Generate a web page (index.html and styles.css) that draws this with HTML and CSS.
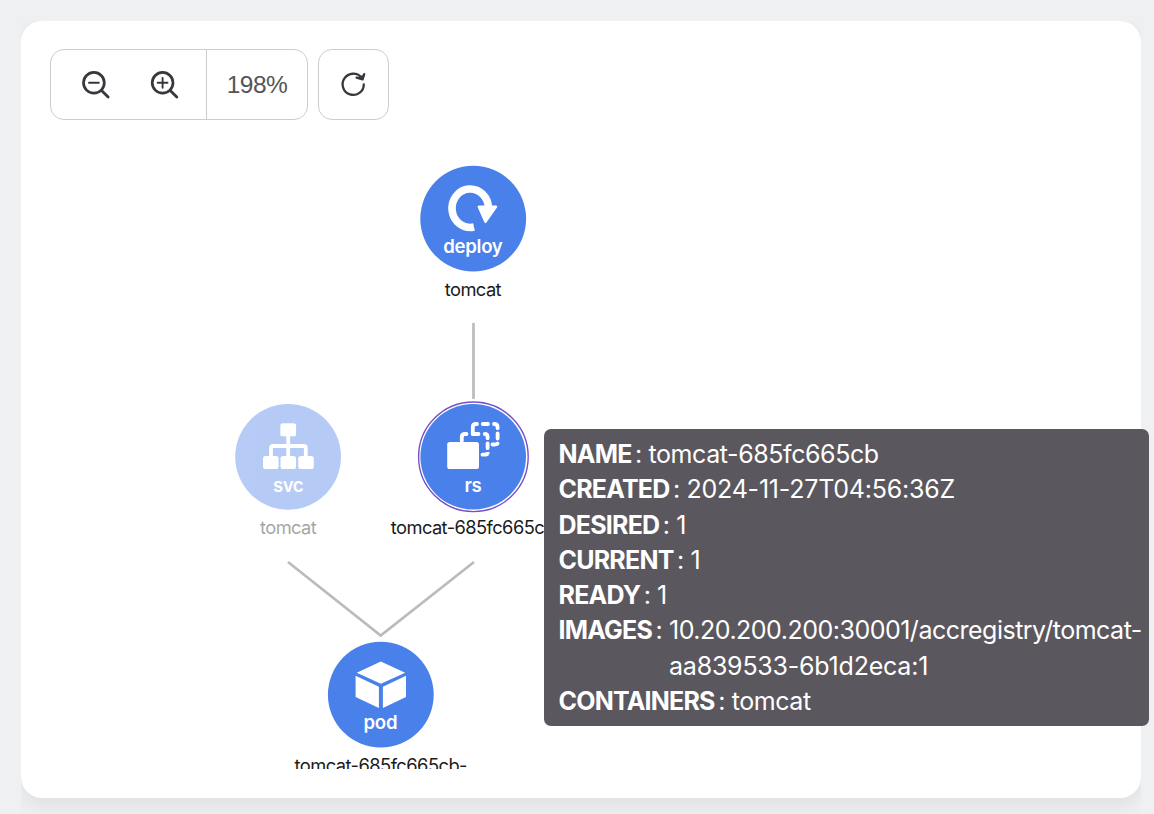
FILE: index.html
```html
<!DOCTYPE html>
<html lang="en">
<head>
<meta charset="utf-8">
<title>Workload topology</title>
<link rel="stylesheet" href="styles.css">
</head>
<body>
<main class="card">
  <div class="toolbar">
    <div class="zoom-group">
      <div class="zoom-buttons">
        <button class="icon-button" aria-label="Zoom out">
          <svg class="icon" viewBox="0 0 30 30"><circle cx="12.9" cy="12.8" r="10.4" stroke-width="2.7"/><path d="M8 12.8h9.8" stroke-width="1.9"/><path d="M20.5 20.4l6.6 6.5" stroke-width="2.8"/></svg>
        </button>
        <button class="icon-button" aria-label="Zoom in">
          <svg class="icon" viewBox="0 0 30 30"><circle cx="12.6" cy="12.8" r="10.4" stroke-width="2.7"/><path d="M7.7 12.8h9.8M12.6 7.9v9.8" stroke-width="1.9"/><path d="M20.2 20.4l6.6 6.5" stroke-width="2.8"/></svg>
        </button>
      </div>
      <div class="zoom-level">198%</div>
    </div>
    <button class="refresh" aria-label="Refresh">
      <svg class="icon" viewBox="0 0 30 30"><path d="M24.8 14.4A10.6 10.6 0 1 1 22.4 7.6" stroke-width="2.3"/><path d="M25.2 4.2L23.6 9.4L17.6 7.6" stroke-width="2.3"/><path d="M25 4.8L23.4 9.2L20 7.2Z" fill="#38373d" stroke-width="0.5"/></svg>
    </button>
  </div>

  <svg class="graph" viewBox="21 120 1120 649">
    <g class="edges">
      <path d="M473.5 323V399"/>
      <path d="M288 562L380.7 635.5L474 562"/>
    </g>
    <g class="node">
      <circle class="disc" cx="473.2" cy="218.7" r="52.9"/>
      <path class="glyph-line" d="M474 227A18.2 19.2 0 1 1 488.4 208" stroke-width="7.6"/>
      <path class="glyph" d="M479.2 205.5H495.8Q498 205.8 497 207.6L486.6 222.2Q485.2 224.2 484.2 222L477.8 207.6Q477 205.6 479.2 205.5Z"/>
      <text class="kind" x="443.3" y="253.3" textLength="59.5">deploy</text>
      <text class="name" x="444.8" y="296" textLength="56.8">tomcat</text>
    </g>
    <g class="node faded">
      <circle class="disc" cx="288.1" cy="456.8" r="52.9"/>
      <g class="glyph">
        <rect x="280.3" y="423.3" width="15.8" height="13" rx="2.6"/>
        <rect x="263" y="456" width="15.6" height="13" rx="2.6"/>
        <rect x="280.5" y="456" width="15.6" height="13" rx="2.6"/>
        <rect x="298.2" y="456" width="15.6" height="13" rx="2.6"/>
      </g>
      <path class="glyph-line" d="M288.2 435V457M271 457V448.2Q271 446 273.2 446H303.6Q305.8 446 305.8 448.2V457" stroke-width="3.8"/>
      <text class="kind" x="273" y="491.5" textLength="30.6">svc</text>
      <text class="name" x="260" y="534" textLength="56.8">tomcat</text>
    </g>
    <g class="node">
      <circle class="ring" cx="473.4" cy="456.8" r="54.8"/>
      <circle class="disc" cx="473.2" cy="456.8" r="52.8"/>
      <rect class="glyph" x="447.2" y="442" width="31.8" height="27" rx="2.6"/>
      <g class="glyph-line" stroke-width="3.8" stroke-linecap="round">
        <path d="M461.8 441V437.2Q461.8 434 465 434H466.5M472.8 434H478.5M484.8 434Q487.6 434 487.6 437V438.2M487.6 443.3V448.2M487.6 453.3V452Q487.6 454.7 485.5 454.7H482.5"/>
        <path d="M472.8 430.8V427.2Q472.8 424 476 424H477M482.8 424H488M494 424Q497.6 424 497.6 427.2V428.2M497.6 433.3V438.5M497.6 443.5Q497.4 444.5 494.5 444.5H492.5M472.8 430V434"/>
      </g>
      <text class="kind" x="464.4" y="491.5" textLength="17.4">rs</text>
      <text class="name" x="390.8" y="534" textLength="164.5">tomcat-685fc665cb</text>
    </g>
    <g class="node">
      <circle class="disc" cx="380.8" cy="694.7" r="52.9"/>
      <path class="glyph" d="M380.8 661.4L405.2 672.8L380.8 683.8L356.8 672.8ZM355.6 675.8L378.9 686.7V708L355.6 697ZM406 675.8L382.9 686.7V708L406 697Z"/>
      <text class="kind" x="363.5" y="729.3" textLength="34">pod</text>
      <text class="name" x="294.5" y="772" textLength="173">tomcat-685fc665cb-</text>
    </g>
  </svg>
</main>

<dl class="tooltip">
  <div class="row"><dt>NAME</dt><dd>tomcat-685fc665cb</dd></div>
  <div class="row"><dt>CREATED</dt><dd class="numeric">2024-11-27T04:56:36Z</dd></div>
  <div class="row"><dt>DESIRED</dt><dd>1</dd></div>
  <div class="row"><dt>CURRENT</dt><dd>1</dd></div>
  <div class="row"><dt>READY</dt><dd>1</dd></div>
  <div class="row"><dt>IMAGES</dt><dd class="image">10.20.200.200:30001/accregistry/tomcat-<br><span class="numeric">aa839533-6b1d2eca:1</span></dd></div>
  <div class="row"><dt>CONTAINERS</dt><dd>tomcat</dd></div>
</dl>
</body>
</html>
```

FILE: styles.css
```css
* { box-sizing: border-box; }

body {
  margin: 0;
  height: 814px;
  padding: 21px 13px 16px 21px;
  overflow: hidden;
  background: #eff0f2;
  font-family: Inter, "Liberation Sans", sans-serif;
}

.card {
  height: 777px;
  padding-top: 28px;
  border-radius: 21px;
  background: #fff;
  box-shadow: 0 8px 20px rgba(0, 0, 0, 0.07);
  clip-path: inset(0 0 -40px 0);
}

.toolbar {
  display: flex;
  gap: 10px;
  height: 71px;
  padding-left: 29px;
}

.zoom-group {
  display: flex;
  width: 258px;
  border: 1px solid #cdcdcf;
  border-radius: 14px;
}

.zoom-buttons {
  display: flex;
  align-items: center;
  gap: 39px;
  width: 156px;
  padding-left: 30px;
  border-right: 1px solid #cdcdcf;
}

button {
  padding: 0;
  border: 0;
  background: none;
}

.icon-button { height: 30px; }

.icon {
  display: block;
  width: 30px;
  height: 30px;
  fill: none;
  stroke: #38373d;
  stroke-linecap: round;
  stroke-linejoin: round;
}

.zoom-level {
  flex: 1;
  align-self: center;
  text-align: center;
  font: 24.5px "Liberation Sans", Arial, sans-serif;
  letter-spacing: -0.5px;
  color: #555;
}

.refresh {
  display: flex;
  align-items: center;
  justify-content: center;
  width: 71px;
  border: 1px solid #cdcdcf;
  border-radius: 14px;
}

.graph {
  display: block;
  width: 1120px;
  height: 649px;
  overflow: hidden;
}

.edges path { fill: none; stroke: #bbb; stroke-width: 2.7; }
.disc { fill: #4980e9; }
.ring { fill: #fff; stroke: #7750c8; stroke-width: 1.4; }
.glyph { fill: #fff; }
.glyph-line { fill: none; stroke: #fff; }
.kind { fill: #fff; font-size: 18.6px; font-weight: 600; }
.name { fill: #1b1b1b; font-size: 18.3px; }
.faded { opacity: 0.4; }

.tooltip {
  position: absolute;
  left: 544px;
  top: 429px;
  width: 605px;
  height: 297px;
  margin: 0;
  padding: 8px 0 0 14.5px;
  border-radius: 7px;
  background: #5b575e;
  color: #fff;
  font-size: 25px;
  line-height: 35.25px;
  white-space: nowrap;
}

.row { display: flex; }
dt { font-weight: 700; letter-spacing: -0.78px; }
dt::after { content: ":"; margin: 0 7px 0 3.5px; font-weight: 400; }
dd { margin: 0; letter-spacing: -0.42px; }
.image { letter-spacing: -0.5px; }
.numeric { letter-spacing: -0.22px; }
```
